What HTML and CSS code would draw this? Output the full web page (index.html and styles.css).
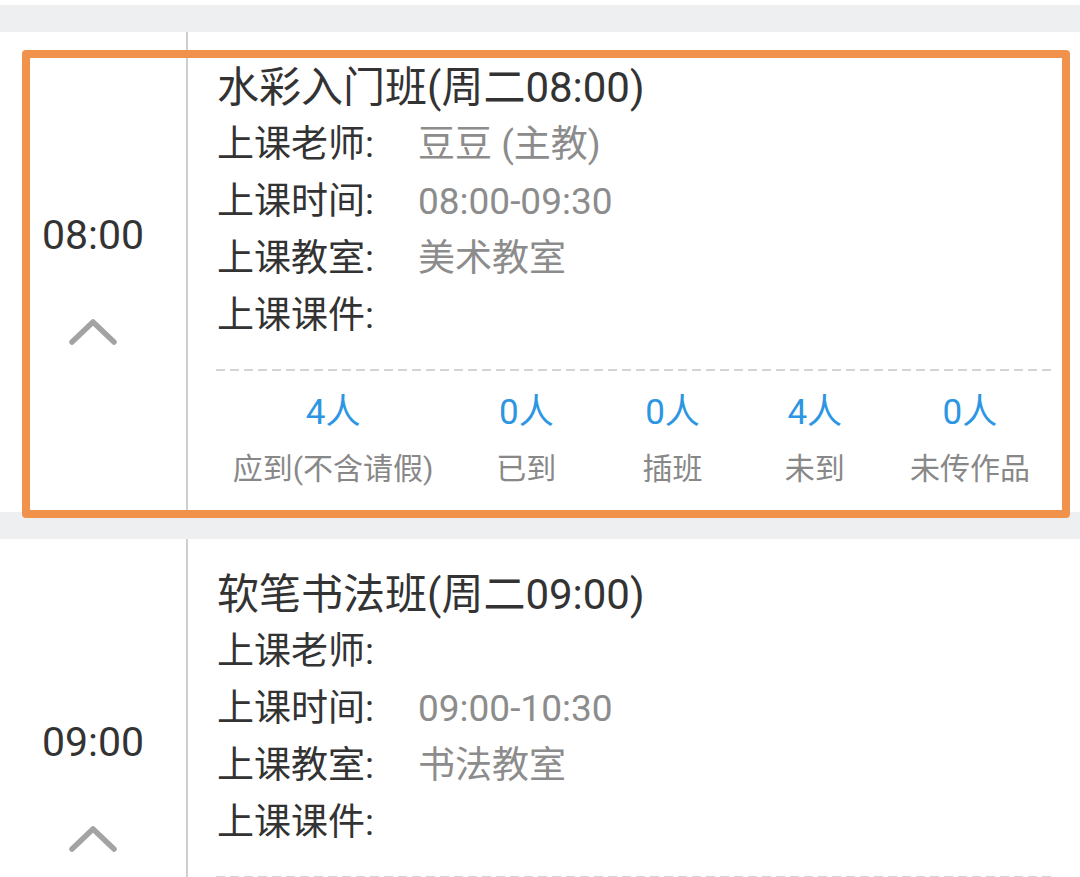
FILE: index.html
```html
<!DOCTYPE html>
<html>
<head>
    <meta name="viewport" content="width=device-width, initial-scale=1">
    <link rel="icon" href="data:,">
    <link rel="stylesheet" href="styles.css">
</head>
<body>
    <div class="page">
        <div class="gap"></div>

        <div class="lesson">
            <div class="time-col">
                <div class="time">08:00</div>
                <svg class="chevron" width="50" height="30" viewBox="0 0 50 30">
                    <polyline points="4,26 25,6 46,26" fill="none" stroke="#a3a3a3" stroke-width="5.5" stroke-linecap="round" stroke-linejoin="round"/>
                </svg>
            </div>
            <div class="detail">
                <div class="title">水彩入门班(周二08:00)</div>
                <div class="info">
                    <span class="label">上课老师:</span><span class="value">豆豆 (主教)</span>
                    <span class="label">上课时间:</span><span class="value">08:00-09:30</span>
                    <span class="label">上课教室:</span><span class="value">美术教室</span>
                    <span class="label">上课课件:</span><span class="value"></span>
                </div>
                <div class="dash"></div>
                <div class="stats">
                    <div class="stat"><span class="num">4人</span><span class="name">应到(不含请假)</span></div>
                    <div class="stat"><span class="num">0人</span><span class="name">已到</span></div>
                    <div class="stat"><span class="num">0人</span><span class="name">插班</span></div>
                    <div class="stat"><span class="num">4人</span><span class="name">未到</span></div>
                    <div class="stat"><span class="num">0人</span><span class="name">未传作品</span></div>
                </div>
            </div>
        </div>

        <div class="gap"></div>

        <div class="lesson">
            <div class="time-col">
                <div class="time">09:00</div>
                <svg class="chevron" width="50" height="30" viewBox="0 0 50 30">
                    <polyline points="4,26 25,6 46,26" fill="none" stroke="#a3a3a3" stroke-width="5.5" stroke-linecap="round" stroke-linejoin="round"/>
                </svg>
            </div>
            <div class="detail">
                <div class="title">软笔书法班(周二09:00)</div>
                <div class="info">
                    <span class="label">上课老师:</span><span class="value"></span>
                    <span class="label">上课时间:</span><span class="value">09:00-10:30</span>
                    <span class="label">上课教室:</span><span class="value">书法教室</span>
                    <span class="label">上课课件:</span><span class="value"></span>
                </div>
                <div class="dash"></div>
            </div>
        </div>

        <!-- selection frame drawn over the first lesson -->
        <div class="highlight"></div>
    </div>
</body>
</html>
```

FILE: styles.css
```css
html {
    background-color: #ffffff;
}

body {
    margin: 0;
    font-family: Roboto, "Noto Sans CJK SC", sans-serif;
    color: #333;
}

.page {
    position: relative;
    padding-top: 5px;
}

.gap {
    height: 27px;
    background-color: #eeeff0;
}

.lesson {
    display: flex;
    height: 480px;
    background-color: #fff;
}

.time-col {
    width: 188px;
    flex-shrink: 0;
    border-right: 2px solid #cfcfcf;
    display: flex;
    flex-direction: column;
    align-items: center;
    justify-content: center;
    gap: 57px;
    padding-top: 12px;
    box-sizing: border-box;
}

.time {
    font-size: 41px;
    line-height: 48px;
    color: #333;
}

.chevron {
    display: block;
}

.detail {
    flex: 1;
    padding: 27px 28px 0 29px;
}

.title {
    font-size: 42px;
    line-height: 57px;
    color: #333;
}

.info {
    display: grid;
    grid-template-columns: 201px auto;
    font-size: 37px;
    line-height: 57px;
}

.label {
    color: #333;
}

.value {
    color: #8c8c8c;
}

.dash {
    height: 2px;
    margin-top: 25px;
    margin-left: -1px;
    background: repeating-linear-gradient(to right, #d4d4d4 0 9px, transparent 9px 14px);
}

.stats {
    display: grid;
    grid-template-columns: 232fr 154fr 138fr 146fr 164fr;
    padding-top: 20px;
}

.stat {
    display: flex;
    flex-direction: column;
    align-items: center;
    gap: 12px;
}

.num {
    font-size: 35px;
    line-height: 44px;
    color: #2d96e2;
}

.name {
    font-size: 30px;
    line-height: 44px;
    color: #888;
}

.highlight {
    position: absolute;
    top: 50px;
    left: 22px;
    width: 1048px;
    height: 468px;
    box-sizing: border-box;
    border: 8px solid #f0924c;
    border-radius: 4px;
}
```
